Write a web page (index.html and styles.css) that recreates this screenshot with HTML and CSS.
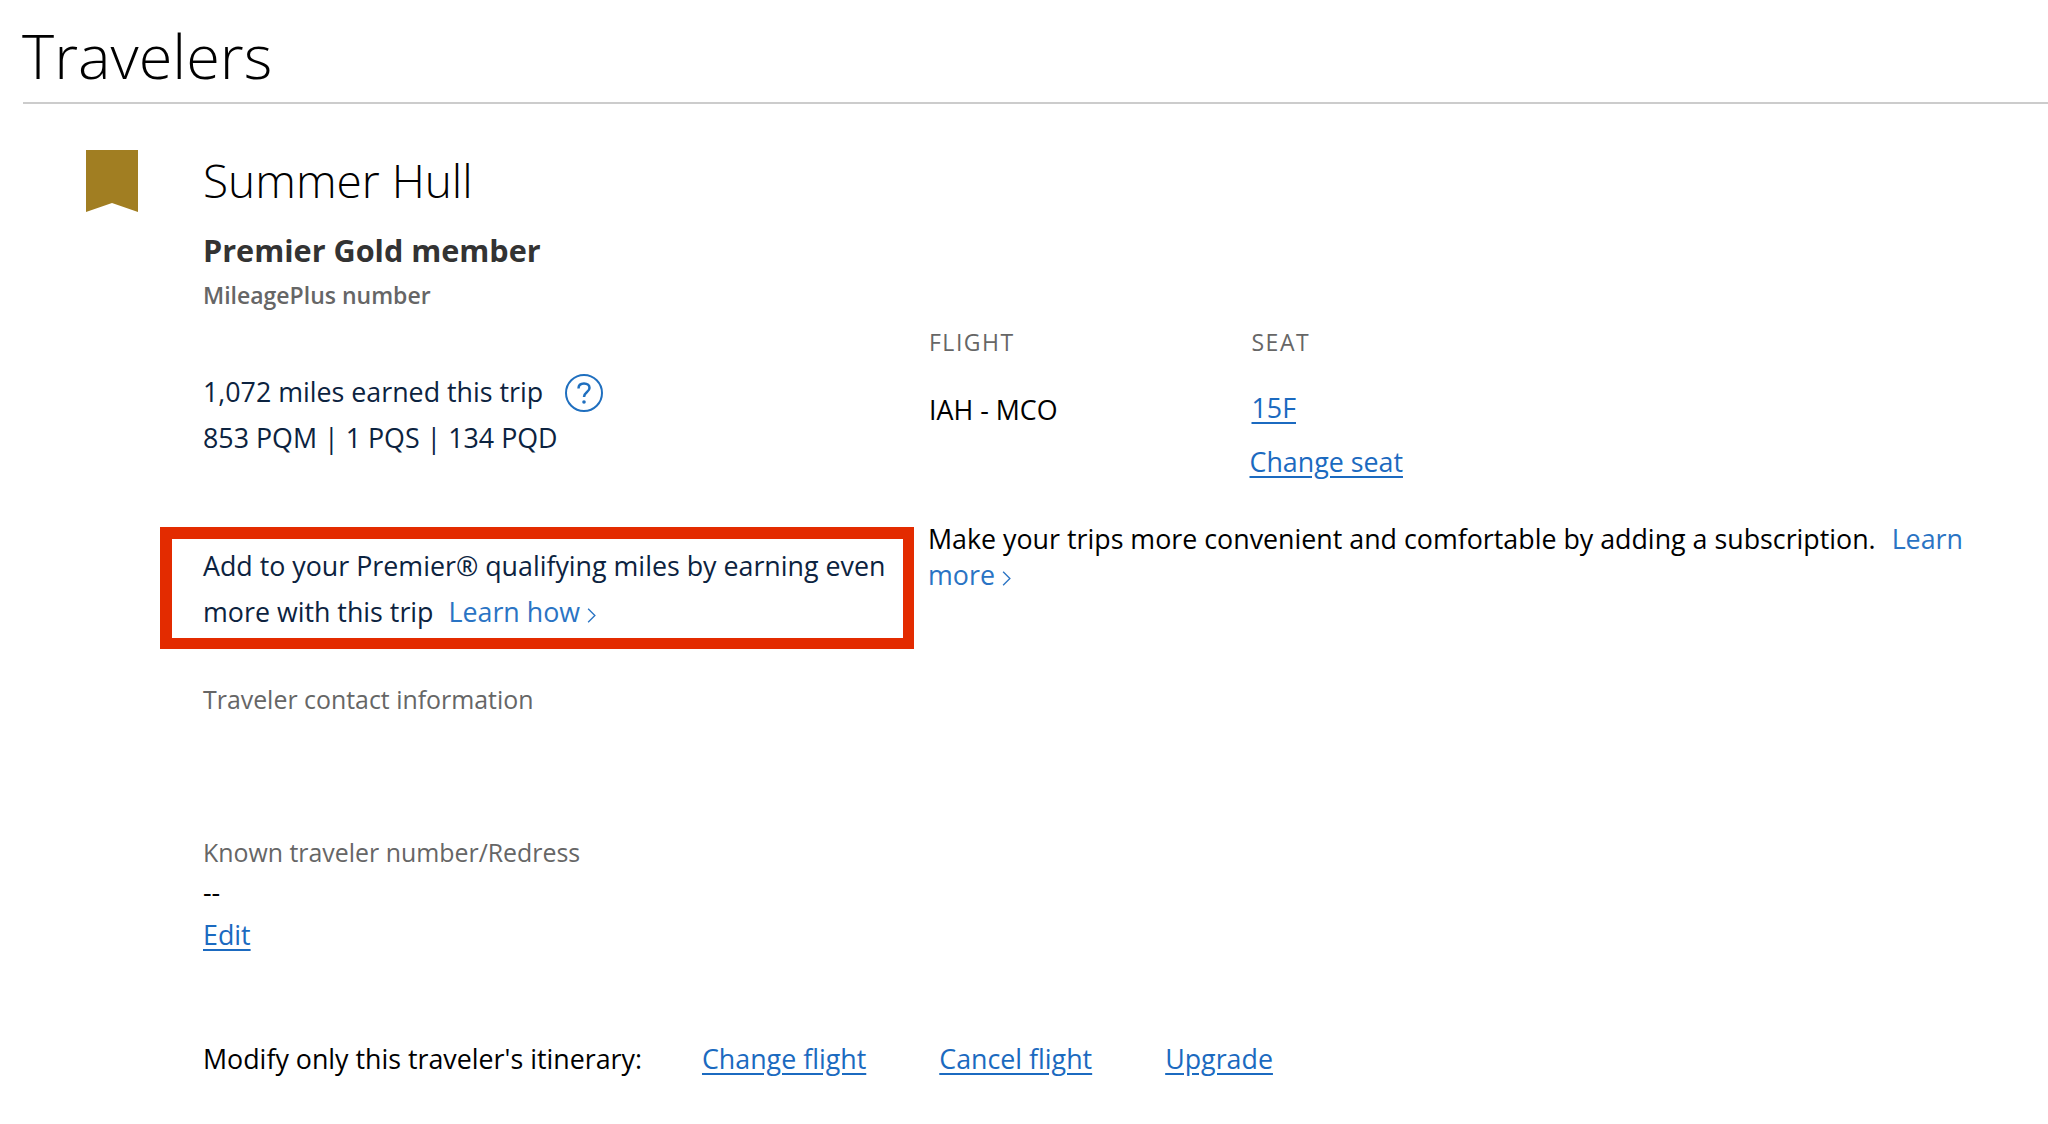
FILE: index.html
```html
<!DOCTYPE html>
<html lang="en">
<head>
<meta charset="utf-8">
<title>Travelers</title>
<link rel="stylesheet" href="styles.css">
</head>
<body>
<main class="page">
  <h1 class="title">Travelers</h1>
  <section class="traveler">
    <svg class="ribbon" viewBox="0 0 52 62" aria-hidden="true"><path d="M0 0H52V62L26 53L0 62Z"/></svg>
    <div class="details">
      <h2 class="name">Summer Hull</h2>
      <p class="tier">Premier Gold member</p>
      <p class="mp">MileagePlus number</p>
      <div class="summary">
        <div class="miles">
          <p class="miles-line">1,072 miles earned this trip
            <svg class="help" viewBox="0 0 38 38" aria-hidden="true"><circle cx="19" cy="19" r="18" class="help-ring"/><path d="M13.500 14.500C13.500 11 16 9.500 19 9.500C22.500 9.500 24.500 11.500 24.500 14C24.500 18 19 18 19 23" class="help-mark"/><circle cx="19" cy="28" r="1.800" class="help-dot"/></svg>
          </p>
          <p class="miles-line second">853 PQM | 1 PQS | 134 PQD</p>
        </div>
        <div class="seats">
          <div class="seat-col flight-col">
            <div class="col-head">FLIGHT</div>
            <div class="route">IAH - MCO</div>
          </div>
          <div class="seat-col">
            <div class="col-head">SEAT</div>
            <a class="link seat-num" href="#">15F</a>
            <a class="link change-seat" href="#">Change seat</a>
          </div>
        </div>
        <div class="promo">
          <p>Add to your Premier® qualifying miles by earning even more with this trip <a class="plain-link learn-how" href="#">Learn how<svg class="chev" viewBox="0 0 8 14" aria-hidden="true"><path d="M1 1L7 7L1 13"/></svg></a></p>
        </div>
        <p class="subscription">Make your trips more convenient and comfortable by adding a subscription. <a class="plain-link learn-more" href="#">Learn more<svg class="chev" viewBox="0 0 8 14" aria-hidden="true"><path d="M1 1L7 7L1 13"/></svg></a></p>
      </div>
      <p class="label contact">Traveler contact information</p>
      <p class="label known">Known traveler number/Redress</p>
      <p class="dash">--</p>
      <a class="link edit" href="#">Edit</a>
      <div class="modify">
        <span class="modify-label">Modify only this traveler's itinerary:</span>
        <a class="link" href="#">Change flight</a>
        <a class="link" href="#">Cancel flight</a>
        <a class="link" href="#">Upgrade</a>
      </div>
    </div>
  </section>
</main>
</body>
</html>
```
FILE: styles.css
```css
* { box-sizing: border-box; }
html, body { margin: 0; padding: 0; background: #fff; }
body { font-family: "Open Sans", "Liberation Sans", sans-serif; font-size: 26.8px; color: #000; overflow-x: hidden; }
p, h1, h2 { margin: 0; font-weight: 400; }
.page { height: 1124px; padding-left: 23px; overflow: hidden; }
.title { font-size: 61.300px; font-weight: 300; line-height: 84px; padding-top: 13px; height: 104px; border-bottom: 2px solid #ccc; text-indent: -1px; }
.traveler { display: flex; padding: 46px 0 0 63px; }
.ribbon { width: 52px; height: 62px; flex: none; margin-right: 65px; }
.ribbon path { fill: #a17e22; }
.details { flex: 1; min-width: 0; }
.name { font-size: 46px; font-weight: 300; line-height: 60px; }
.tier { font-size: 30.600px; font-weight: 700; color: #333; line-height: 40px; margin-top: 20px; }
.mp { font-size: 23px; font-weight: 600; color: #666; line-height: 30px; margin-top: 10px; }
.summary { display: grid; grid-template-columns: 725px 1fr; }
.miles { padding-top: 58.500px; color: #0c2340; }
.miles-line { line-height: 46px; display: flex; align-items: center; }
.help { width: 38px; height: 38px; margin-left: 22px; position: relative; top: 1px; }
.help-ring { fill: none; stroke: #1f6fbf; stroke-width: 2; }
.help-mark { fill: none; stroke: #1f6fbf; stroke-width: 2.500; }
.help-dot { fill: #1f6fbf; }
.seats { display: flex; padding-top: 17px; }
.seat-col { display: flex; flex-direction: column; align-items: flex-start; }
.flight-col { width: 321px; padding-left: 1px; margin-right: 2.500px; }
.col-head { font-size: 23px; color: #666; letter-spacing: 1.500px; line-height: 30px; }
.route { line-height: 36px; margin-top: 35px; }
.link { color: #1b6ac0; text-decoration: underline; text-underline-offset: 4px; }
.plain-link { color: #2a74c4; text-decoration: none; }
.seat-num { line-height: 36px; margin-top: 33px; }
.change-seat { line-height: 36px; margin-top: 18px; margin-left: -2px; }
.promo { margin: 46.500px 0 0 -43px; width: 754px; height: 122px; border: 12px solid #e32b00; border-right-width: 11px; border-bottom-width: 11px; padding: 2px 0 0 31px; color: #0c2340; line-height: 46px; display: flex; align-items: center; }
.learn-how { margin-left: 8px; }
.chev { width: 9px; height: 17px; margin-left: 7px; vertical-align: -2px; fill: none; stroke: currentColor; stroke-width: 1.200; }
.subscription { margin-top: 41px; line-height: 36px; padding-right: 60px; }
.learn-more { margin-left: 9px; }
.label { font-size: 24.900px; color: #666; line-height: 34px; }
.contact { margin-top: 33px; }
.known { margin-top: 119px; }
.dash { line-height: 36px; margin-top: 5px; }
.edit { display: inline-block; line-height: 36px; margin-top: 7px; }
.modify { display: flex; margin-top: 88px; line-height: 36px; }
.modify-label { margin-right: 60px; }
.modify .link { margin-right: 73px; }
```
